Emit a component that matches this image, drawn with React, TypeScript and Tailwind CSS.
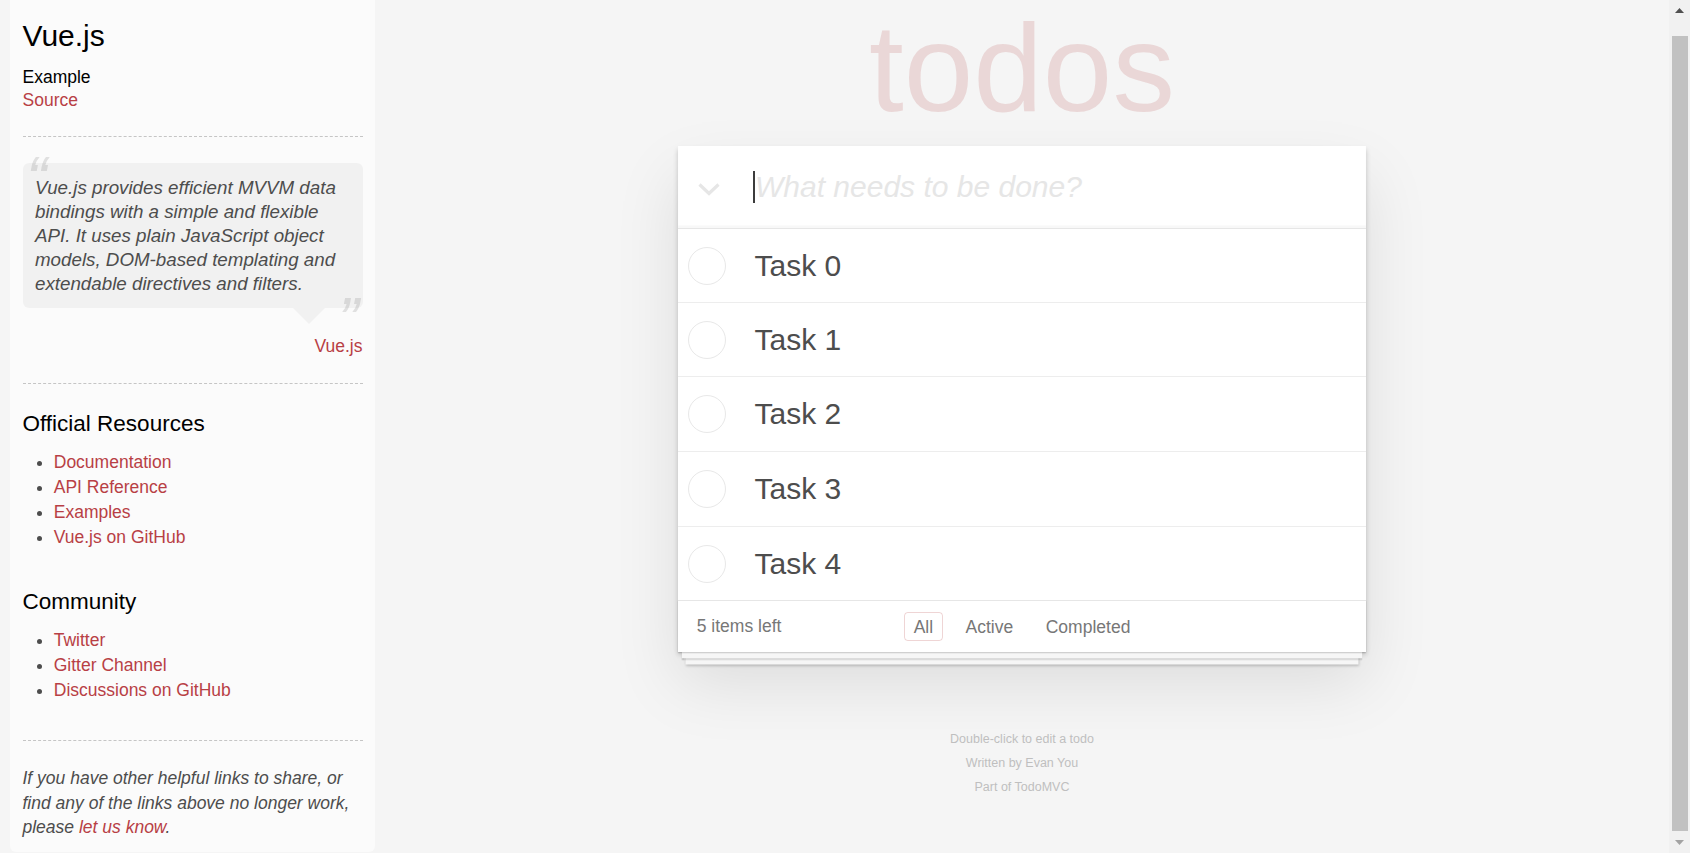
import React from "react";

const TASKS = [
  { label: "Task 0", h: "h-[74px]", divider: true },
  { label: "Task 1", h: "h-[74px]", divider: true },
  { label: "Task 2", h: "h-[75px]", divider: true },
  { label: "Task 3", h: "h-[75px]", divider: true },
  { label: "Task 4", h: "h-[73px]", divider: false },
];

const OFFICIAL = ["Documentation", "API Reference", "Examples", "Vue.js on GitHub"];
const COMMUNITY = ["Twitter", "Gitter Channel", "Discussions on GitHub"];

function LinkList({ items }: { items: string[] }) {
  return (
    <ul className="ml-[31.25px] mt-[12.5px] list-disc text-[17.5px] leading-[25px] text-[#4d4d4d]">
      {items.map((item) => (
        <li key={item}>
          <a href="#" className="text-[#b83f45]">
            {item}
          </a>
        </li>
      ))}
    </ul>
  );
}

function Sidebar() {
  return (
    <aside className="shrink-0 pl-[10px]">
      <div className="flex w-[365px] flex-col rounded-b-[6px] bg-white/60 px-[12.5px] pb-[12.5px] pt-[5.5px]">
        <h3 className="mt-[12.5px] text-[30px] leading-[36px] text-black">Vue.js</h3>
        <h5 className="mt-[12.5px] text-[17.5px] leading-[21px] text-black">Example</h5>
        <a href="#" className="text-[17.5px] leading-[24.5px] text-[#b83f45]">
          Source
        </a>

        <div className="mt-[24px] border-t border-dashed border-[#c5c5c5]" />

        <blockquote className="relative mt-[26px] rounded-[6px] bg-black/[0.04] p-[12.5px]">
          <span
            aria-hidden
            className="absolute left-[3.75px] top-[-25px] text-[62.5px] italic leading-[81.25px] text-[#4d4d4d]/15"
          >
            “
          </span>
          <p className="text-[18.75px] italic leading-[24px] text-[#4d4d4d]">
            Vue.js provides efficient MVVM data bindings with a simple and flexible API. It uses plain
            JavaScript object models, DOM-based templating and extendable directives and filters.
          </p>
          <span
            aria-hidden
            className="absolute bottom-[-52.5px] right-[3.75px] text-[62.5px] italic leading-[81.25px] text-[#4d4d4d]/15"
          >
            ”
          </span>
          <span
            aria-hidden
            className="absolute right-[37.5px] top-full border-[16.25px] border-transparent border-t-black/[0.04]"
          />
        </blockquote>
        <div className="mt-[25.5px] text-right text-[17.5px] leading-[24.5px]">
          <a href="#" className="text-[#b83f45]">
            Vue.js
          </a>
        </div>

        <div className="mt-[25px] border-t border-dashed border-[#c5c5c5]" />

        <h4 className="mt-[26px] text-[22.5px] leading-[27px] text-black">Official Resources</h4>
        <LinkList items={OFFICIAL} />

        <h4 className="mt-[38.5px] text-[22.5px] leading-[27px] text-black">Community</h4>
        <LinkList items={COMMUNITY} />

        <div className="mt-[37.5px] border-t border-dashed border-[#c5c5c5]" />

        <p className="mt-[25px] text-[17.5px] italic leading-[24.5px] text-[#4d4d4d]">
          If you have other helpful links to share, or find any of the links above no longer work, please{" "}
          <a href="#" className="text-[#b83f45]">
            let us know
          </a>
          .
        </p>
      </div>
    </aside>
  );
}

function TodoApp() {
  return (
    <main className="flex min-w-0 flex-1 flex-col items-center">
      <div className="flex w-[688px] flex-col">
        <h1 className="mb-[16px] mt-[5px] h-[125px] text-center text-[125px] leading-[125px] text-[rgba(175,47,47,0.15)]">
          todos
        </h1>

        <section className="bg-white shadow-[0_2.5px_5px_0_rgba(0,0,0,0.2),0_31px_62px_0_rgba(0,0,0,0.1)]">
          <header className="flex h-[82px] items-center shadow-[inset_0_-2.5px_1.25px_rgba(0,0,0,0.03)]">
            <div className="mt-[4px] w-[75px] pl-[20px]">
              <svg width="22" height="13" viewBox="0 0 22 13" fill="none">
                <polyline
                  points="1.5,1.5 11,10.5 20.5,1.5"
                  stroke="#e6e6e6"
                  strokeWidth="3.2"
                  strokeLinejoin="miter"
                />
              </svg>
            </div>
            <span className="h-[32px] w-[2px] bg-[#3c3c3c]" />
            <span className="text-[30px] italic leading-none text-[#e6e6e6]">What needs to be done?</span>
          </header>

          <ul className="border-t border-[#e6e6e6]">
            {TASKS.map((task) => (
              <li
                key={task.label}
                className={`flex items-center ${task.h} ${task.divider ? "border-b border-[#ededed]" : ""}`}
              >
                <span className="ml-[9.5px] h-[38px] w-[38px] rounded-full border border-[#e8e8e8]" />
                <label className="ml-[29px] text-[30px] leading-none text-[#4d4d4d]">{task.label}</label>
              </li>
            ))}
          </ul>

          <footer className="grid h-[52px] grid-cols-[1fr_auto_1fr] items-center border-t border-[#e6e6e6] px-[18.75px] text-[17.5px] text-[#777] shadow-[0_1.25px_1.25px_rgba(0,0,0,0.2),0_10px_0_-3.75px_#f6f6f6,0_11.25px_1.25px_-3.75px_rgba(0,0,0,0.2),0_20px_0_-7.5px_#f6f6f6,0_21.25px_2.5px_-7.5px_rgba(0,0,0,0.2)]">
            <span>5 items left</span>
            <ul className="flex gap-[13px]">
              <li>
                <a
                  href="#"
                  className="block rounded-[3.75px] border border-[rgba(175,47,47,0.2)] px-[8.75px] py-[3.75px] leading-[20px]"
                >
                  All
                </a>
              </li>
              <li>
                <a href="#" className="block rounded-[3.75px] border border-transparent px-[8.75px] py-[3.75px] leading-[20px]">
                  Active
                </a>
              </li>
              <li>
                <a href="#" className="block rounded-[3.75px] border border-transparent px-[8.75px] py-[3.75px] leading-[20px]">
                  Completed
                </a>
              </li>
            </ul>
            <span />
          </footer>
        </section>

        <div className="mt-[75px] text-center text-[12.5px] leading-[24px] text-[#bfbfbf]">
          <p>Double-click to edit a todo</p>
          <p>
            Written by <a href="#">Evan You</a>
          </p>
          <p>
            Part of <a href="#">TodoMVC</a>
          </p>
        </div>
      </div>
    </main>
  );
}

function Scrollbar() {
  return (
    <div className="flex w-[21px] shrink-0 flex-col bg-[#f1f1f1]">
      <div className="flex h-[21px] items-center justify-center">
        <svg width="9" height="5" viewBox="0 0 9 5">
          <polygon points="0,5 4.5,0 9,5" fill="#505050" />
        </svg>
      </div>
      <div className="flex-1 pt-[15px]">
        <div className="mx-auto h-[795px] w-[16px] bg-[#c1c1c1]" />
      </div>
      <div className="flex h-[21px] items-center justify-center">
        <svg width="9" height="5" viewBox="0 0 9 5">
          <polygon points="0,0 9,0 4.5,5" fill="#a3a3a3" />
        </svg>
      </div>
    </div>
  );
}

export default function App() {
  return (
    <div className="flex h-[853px] w-full overflow-hidden bg-[#f5f5f5] [font-family:'Liberation_Sans',Arial,sans-serif]">
      <Sidebar />
      <TodoApp />
      <Scrollbar />
    </div>
  );
}
